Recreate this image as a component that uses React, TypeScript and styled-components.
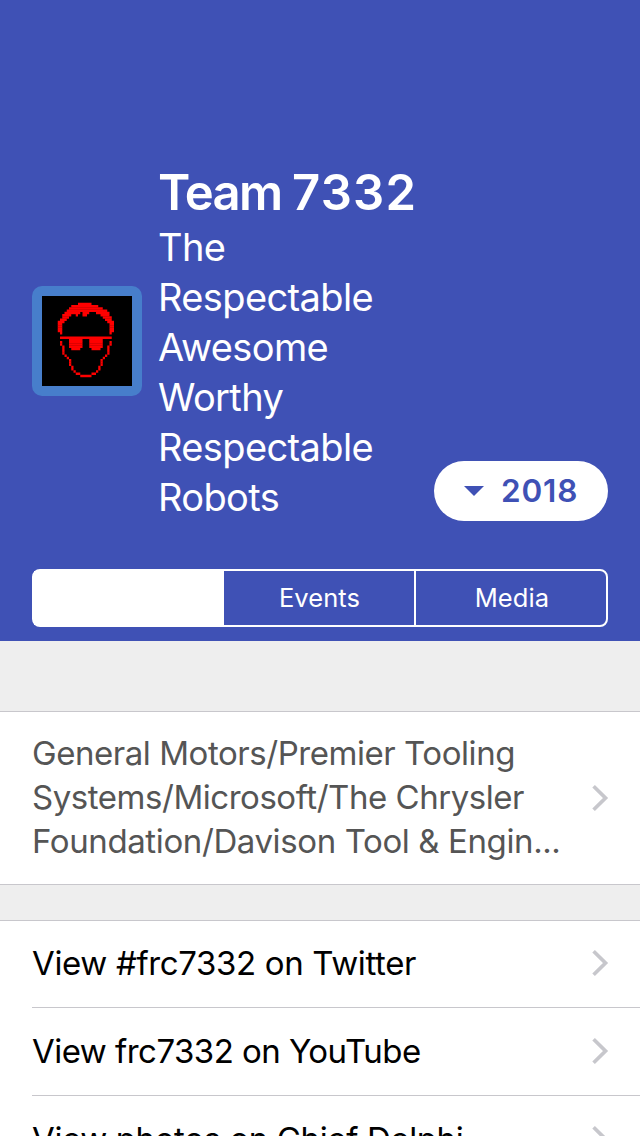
import React from "react";
import styled, { createGlobalStyle } from "styled-components";

const Global = createGlobalStyle`
  * { box-sizing: border-box; }
  body {
    margin: 0;
    background: #eeeeee;
    font-family: Inter, "Liberation Sans", sans-serif;
    font-feature-settings: "calt" 0;
  }
`;

const Screen = styled.div`
  width: 640px;
  height: 1136px;
  overflow: hidden;
  background: #eeeeee;
`;

const Header = styled.header`
  display: flex;
  flex-direction: column;
  height: 641px;
  padding: 161px 32px 14px;
  background: #3f51b5;
  color: #ffffff;
`;

const TeamRow = styled.div`
  display: flex;
  align-items: center;
  height: 360px;
`;

const Avatar = styled.div`
  flex: none;
  width: 110px;
  height: 110px;
  padding: 10px;
  border-radius: 10px;
  background: #477ecb;

  svg { display: block; background: #000000; }
`;

const TeamText = styled.div`
  flex: 1;
  padding: 2px 0 0 16px;
  white-space: nowrap;
`;

const TeamName = styled.h1`
  margin: 0;
  padding-top: 2px;
  font-size: 49px;
  line-height: 58px;
  font-weight: 600;
  letter-spacing: -1.7px;
`;

const TeamNumber = styled.span`
  letter-spacing: 1.2px;
`;

const Nickname = styled.p`
  margin: 0;
  width: 230px;
  font-size: 38px;
  line-height: 50px;
  letter-spacing: -0.62px;
  white-space: normal;
`;

const YearButton = styled.button`
  display: flex;
  flex: none;
  align-items: center;
  align-self: flex-end;
  gap: 17px;
  width: 174px;
  height: 60px;
  padding: 0 0 0 30px;
  border: 0;
  border-radius: 30px;
  background: #ffffff;
  color: #3f51b5;
  font: 600 31.5px/60px Inter, sans-serif;
  letter-spacing: 0.8px;
`;

const Segments = styled.nav`
  display: grid;
  grid-template-columns: 190px 190px 192px;
  height: 58px;
  margin-top: 48px;
  border: 2px solid #ffffff;
  border-radius: 8px;
`;

const Segment = styled.button<{ $active?: boolean; $divided?: boolean }>`
  padding: 0 0 0 ${(p) => (p.$divided ? "2px" : "1px")};
  border: 0;
  border-left: ${(p) => (p.$divided ? "2px solid #ffffff" : "0")};
  background: ${(p) => (p.$active ? "#ffffff" : "transparent")};
  color: #ffffff;
  font: 400 25.5px/54px Inter, sans-serif;
  letter-spacing: 0.1px;
`;

const Group = styled.section<{ $gap: number }>`
  margin-top: ${(p) => p.$gap}px;
  border-top: 1px solid #c8c7cc;
  border-bottom: 1px solid #c8c7cc;
  background: #ffffff;
`;

const Row = styled.div<{ $height: number }>`
  display: flex;
  align-items: center;
  justify-content: space-between;
  height: ${(p) => p.$height}px;
  margin-left: 32px;
  padding-right: 31px;

  & + & { border-top: 1px solid #c8c7cc; }
`;

const Sponsors = styled.div`
  padding-bottom: 2px;
  font-size: 33px;
  line-height: 44px;
  color: #555555;
  white-space: nowrap;
`;

const Line = styled.div<{ $spacing: number }>`
  letter-spacing: ${(p) => p.$spacing}px;
`;

const LinkLabel = styled.div<{ $spacing: number }>`
  padding-bottom: 2px;
  font-size: 33px;
  line-height: 44px;
  color: #000000;
  white-space: nowrap;
  letter-spacing: ${(p) => p.$spacing}px;
`;

const ChevronIcon = styled.svg<{ $raise: number }>`
  display: block;
  flex: none;
  margin-bottom: ${(p) => p.$raise}px;
`;

const Chevron = ({ raise = 0 }: { raise?: number }) => (
  <ChevronIcon $raise={raise} width="17" height="26" viewBox="0 0 17 26">
    <path d="M1.6 1.3 13.5 13 1.6 24.7" fill="none" stroke="#c7c7cc" strokeWidth="3.7" />
  </ChevronIcon>
);

// Each run is [row, first column, length] on a 40 x 40 grid.
const face: number[][] = [
  [3, 16, 6], [4, 13, 12], [5, 12, 15], [6, 11, 18], [7, 10, 7], [7, 18, 3], [7, 24, 6],
  [8, 9, 4], [8, 15, 1], [8, 18, 2], [8, 26, 4], [9, 9, 3], [9, 27, 4],
  [10, 8, 3], [10, 28, 3], [11, 7, 3], [11, 29, 3], [12, 7, 2], [12, 30, 2],
  [13, 7, 2], [13, 30, 2], [14, 7, 2], [14, 30, 2], [15, 7, 2], [15, 30, 2],
  [16, 8, 1], [16, 30, 1], [18, 8, 23],
  [19, 12, 6], [19, 21, 6], [20, 12, 6], [20, 21, 6], [21, 12, 6], [21, 21, 6],
  [22, 12, 6], [22, 21, 6], [23, 13, 4], [23, 22, 4],
  [20, 8, 1], [21, 8, 1], [22, 9, 1], [23, 9, 1], [24, 9, 1], [25, 9, 1], [26, 10, 1], [27, 11, 1],
  [28, 12, 1], [29, 12, 1], [30, 12, 1], [31, 13, 1], [32, 13, 1], [33, 14, 1], [34, 15, 2], [35, 17, 5],
  [20, 30, 1], [21, 30, 1], [22, 29, 1], [23, 29, 1], [24, 29, 1], [25, 29, 1], [26, 28, 1], [27, 27, 1],
  [28, 26, 1], [29, 26, 1], [30, 26, 1], [31, 25, 1], [32, 25, 1], [33, 24, 1], [34, 22, 2],
];

export default function App() {
  return (
    <>
      <Global />
      <Screen>
        <Header>
          <TeamRow>
            <Avatar>
              <svg width="90" height="90" viewBox="0 0 40 40">
                {face.map(([y, x, w], i) => (
                  <rect key={i} x={x} y={y} width={w} height="1.1" fill="#ff0000" />
                ))}
              </svg>
            </Avatar>
            <TeamText>
              <TeamName>
                Team <TeamNumber>7332</TeamNumber>
              </TeamName>
              <Nickname>The Respectable Awesome Worthy Respectable Robots</Nickname>
            </TeamText>
            <YearButton>
              <svg width="20" height="10" viewBox="0 0 20 10">
                <path d="M0 0h20L10 10z" fill="#3f51b5" />
              </svg>
              2018
            </YearButton>
          </TeamRow>
          <Segments>
            <Segment $active aria-label="Info" />
            <Segment>Events</Segment>
            <Segment $divided>Media</Segment>
          </Segments>
        </Header>
        <Group $gap={70}>
          <Row $height={172}>
            <Sponsors>
              <Line $spacing={-0.45}>General Motors/Premier Tooling</Line>
              <Line $spacing={-0.46}>Systems/Microsoft/The Chrysler</Line>
              <Line $spacing={-0.39}>Foundation/Davison Tool &amp; Engin...</Line>
            </Sponsors>
            <Chevron />
          </Row>
        </Group>
        <Group $gap={35}>
          <Row $height={86}>
            <LinkLabel $spacing={-0.36}>View #frc7332 on Twitter</LinkLabel>
            <Chevron raise={2} />
          </Row>
          <Row $height={88}>
            <LinkLabel $spacing={-0.53}>View frc7332 on YouTube</LinkLabel>
            <Chevron raise={1} />
          </Row>
          <Row $height={88}>
            <LinkLabel $spacing={-0.39}>View photos on Chief Delphi</LinkLabel>
            <Chevron raise={1} />
          </Row>
        </Group>
      </Screen>
    </>
  );
}
